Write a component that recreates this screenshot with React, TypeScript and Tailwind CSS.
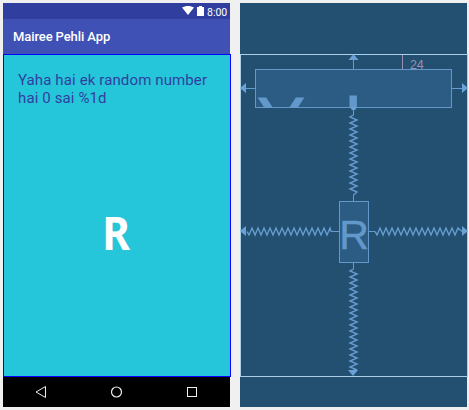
import React from "react";

// Zigzag whose teeth repeat every 6px, drawn along the x axis.
function zigzag(start: number, end: number, mid: number, vertical = false) {
  const points: [number, number][] = [[start, mid]];
  for (let t = start + 2; t < end - 2; t += 6) {
    points.push([t, mid + (vertical ? -3.5 : 3.5)]);
    points.push([t + 3, mid + (vertical ? 3.5 : -3.5)]);
  }
  points.push([end, mid]);
  return points.map(([a, b]) => (vertical ? `${b},${a}` : `${a},${b}`)).join(" ");
}

function Design() {
  return (
    <div className="flex w-[228px] flex-col font-['Roboto',sans-serif]">
      <div className="flex h-4 w-[227px] items-start justify-end bg-[#303f9f] pr-[3px] text-white">
        <svg width="25" height="16" viewBox="0 0 25 16" fill="white">
          <path d="M0 4.5C3.5 2.4 8.5 2.4 12 4.5L6 12Z" />
          <path d="M15 4H17V3H20V4H22V13H15Z" />
        </svg>
        <span className="w-5 whitespace-nowrap pt-[3px] text-[10.5px] leading-[14px]">8:00</span>
      </div>
      <div className="flex h-[35px] w-[227px] items-center bg-[#3f51b5] pl-[10px] text-[13px] font-medium tracking-[-0.1px] text-white">
        Mairee Pehli App
      </div>
      <div className="flex h-[323px] flex-col border border-[#0000ff] bg-[#26c6da]">
        <p className="ml-[14px] mt-4 whitespace-nowrap text-[15px] leading-[18px] tracking-[0.12px] text-[#303f9f]">
          Yaha hai ek random number
          <br />
          hai 0 sai %1d
        </p>
        <div className="mt-[95px] scale-x-[0.92] pr-[2px] text-center font-['Noto_Sans',sans-serif] text-[46px] font-bold leading-[60px] text-white">
          R
        </div>
      </div>
      <div className="flex h-[30px] w-[227px] items-center justify-around bg-black">
        <svg width="14" height="14" viewBox="0 0 14 14" fill="none" stroke="#eee">
          <path d="M11.5 1.5V12.5L2 7Z" />
        </svg>
        <svg width="14" height="14" viewBox="0 0 14 14" fill="none" stroke="#eee" strokeWidth="1.2">
          <circle cx="7.5" cy="7" r="5" />
        </svg>
        <svg width="14" height="14" viewBox="0 0 14 14" fill="none" stroke="#eee">
          <rect x="2.5" y="2.5" width="9" height="9" />
        </svg>
      </div>
    </div>
  );
}

function Blueprint() {
  return (
    <div className="flex w-[228px] flex-col">
      <div className="h-[51px] w-[227px] bg-[#234f70]" />
      <div className="relative h-[323px] w-[228px] bg-[#234f70]">
        <span className="absolute left-[170px] top-[4px] font-['Liberation_Sans',sans-serif] text-[12.5px] leading-[15px] tracking-[-0.3px] text-[#9a8fb2]">
          24
        </span>
        <div className="absolute left-[15px] top-[15px] h-[39px] w-[197px] overflow-hidden border border-[#6398cb] bg-[#2c5c84] pl-px pt-[17px] font-['Liberation_Sans',sans-serif] text-[72px] leading-[72px] text-[#6398cb] [font-kerning:none] [-webkit-text-stroke:1px_#6398cb]">
          Yah
        </div>
        <div className="absolute left-[99px] top-[147px] flex h-[62px] w-[30px] items-center justify-center border border-[#6398cb] bg-[#2c5c84] pt-[7px] font-['Liberation_Sans',sans-serif] text-[41px] leading-none text-[#6398cb] [-webkit-text-stroke:0.5px_#6398cb]">
          R
        </div>
        <svg className="absolute inset-0" width="228" height="323" viewBox="0 0 228 323" fill="none" stroke="#659ccf">
          <rect x="0.5" y="0.5" width="227" height="322" stroke="#abd0e8" />
          <path d="M113.5 15V5M15 34.5H5M212 34.5H222M91 177.5H99M129 177.5H135M113.5 54V61M113.5 141V147M113.5 209V215" />
          <path d="M162.5 1V15" stroke="#9a8fb2" />
          <polyline strokeWidth="1.4" points={zigzag(7, 91, 177.5)} />
          <polyline strokeWidth="1.4" points={zigzag(135, 222, 177.5)} />
          <polyline strokeWidth="1.4" points={zigzag(61, 141, 113.5, true)} />
          <polyline strokeWidth="1.4" points={zigzag(215, 316, 113.5, true)} />
          <g fill="#6aa2d8" stroke="none">
            <path d="M113.5 0L118.5 6H108.5Z" />
            <path d="M0 34L6 29V39Z" />
            <path d="M228 34L222 29V39Z" />
            <path d="M0 177L6 172V182Z" />
            <path d="M228 177L222 172V182Z" />
            <path d="M108 316H118L113 322Z" />
            <path d="M110 53H117L115 56H112Z" />
          </g>
        </svg>
      </div>
      <div className="h-[30px] w-[227px] bg-[#234f70]" />
    </div>
  );
}

export default function App() {
  return (
    <div className="flex h-[410px] w-[469px] gap-[9px] overflow-hidden bg-[#f0f0f0] pl-[3px] pt-[3px]">
      <Design />
      <Blueprint />
    </div>
  );
}
